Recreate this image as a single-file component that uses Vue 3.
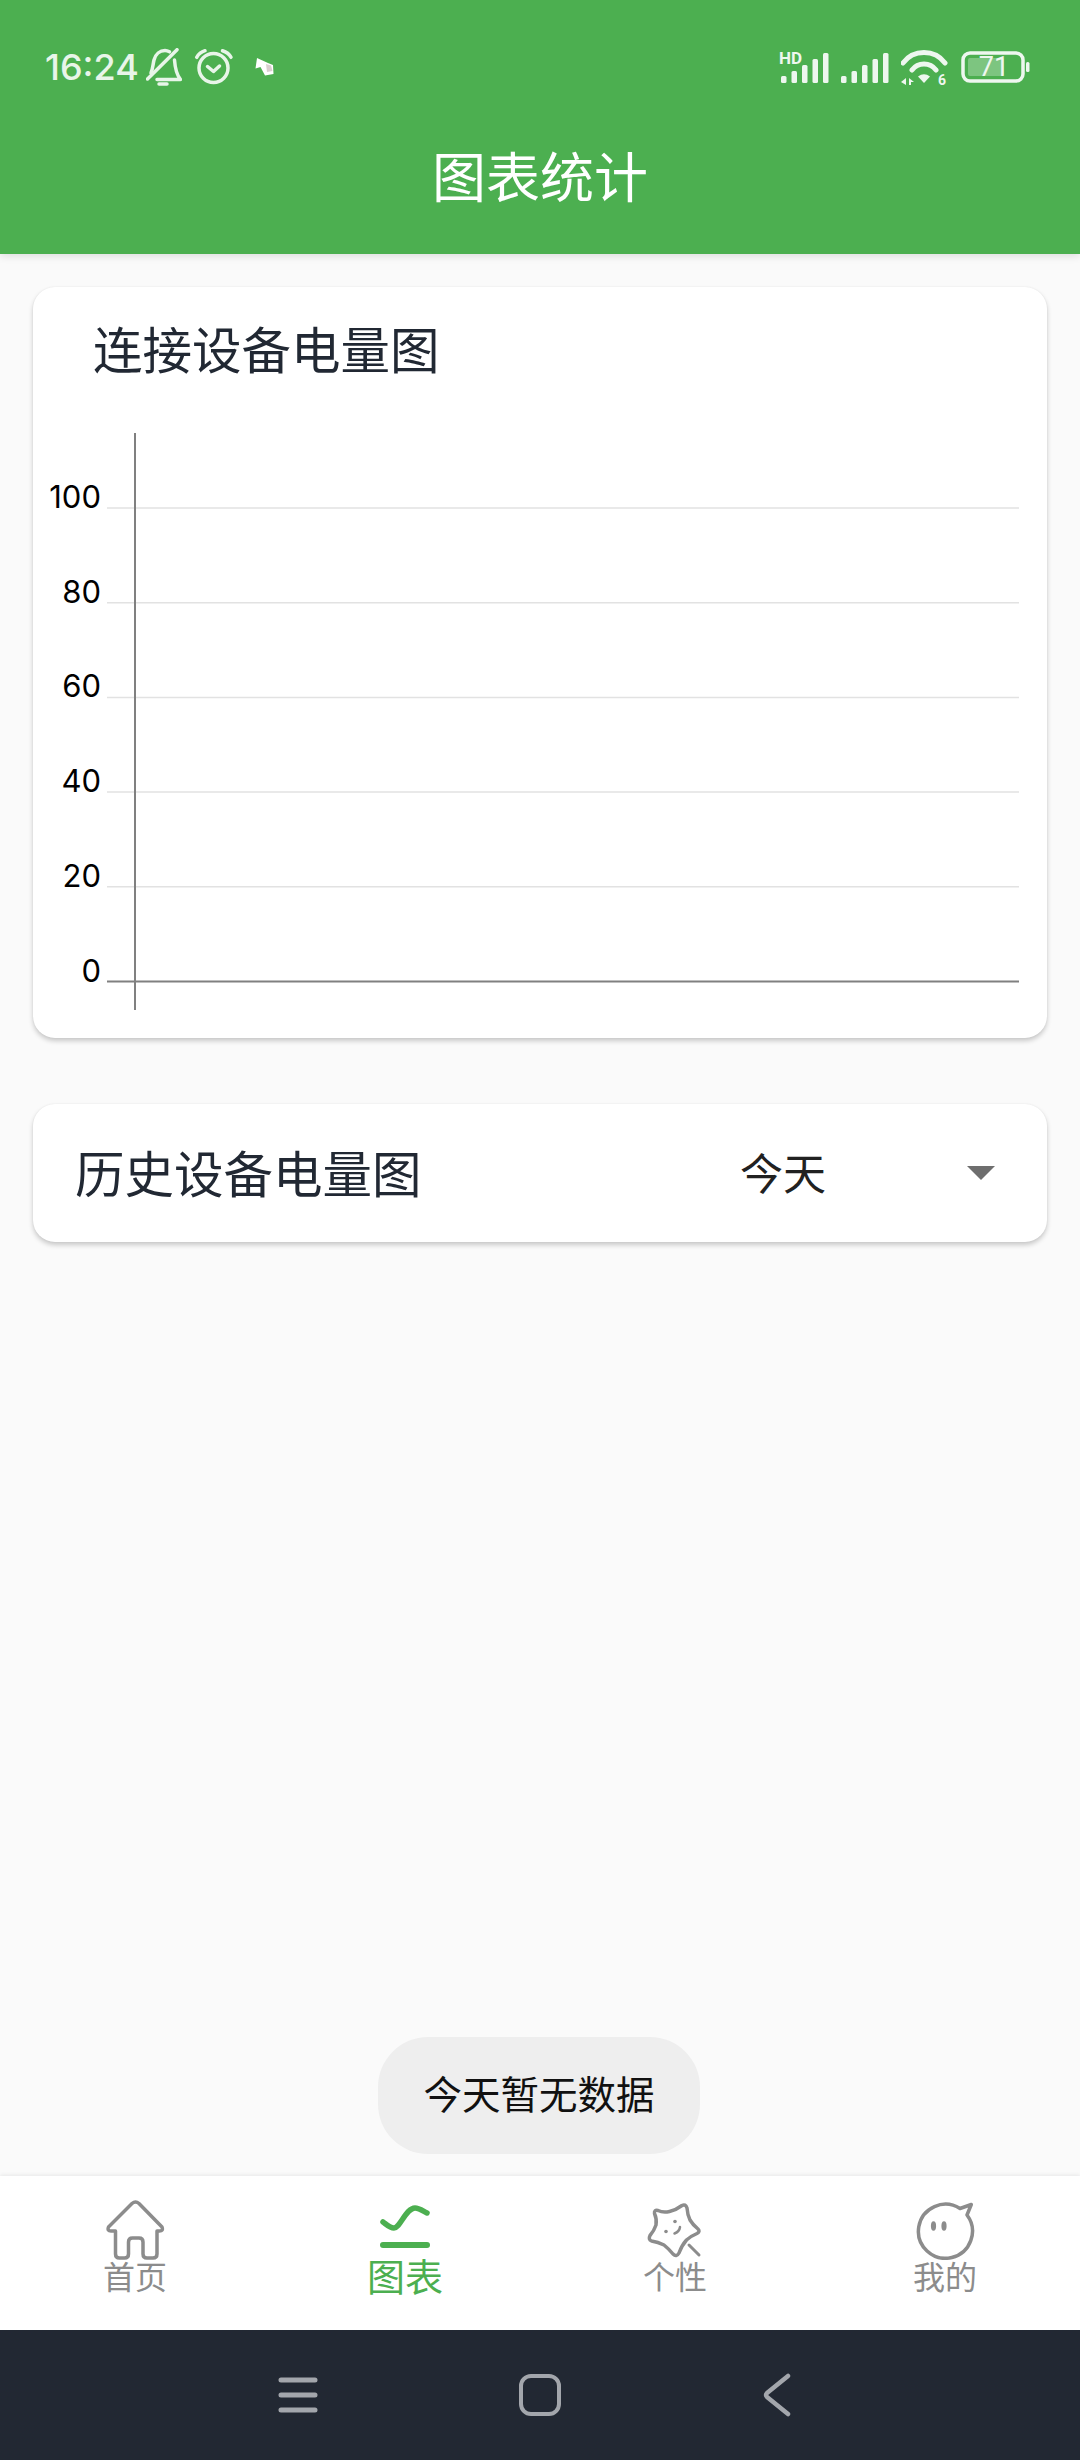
<script setup>
// y axis labels, top to bottom (value 100 sits at y 75 inside the chart svg)
const ticks = [100, 80, 60, 40, 20, 0].map((value, i) => ({
  value,
  y: 75 + i * 94.7,
}));

const tabs = [
  { key: 'home', label: '首页' },
  { key: 'chart', label: '图表', active: true },
  { key: 'style', label: '个性' },
  { key: 'mine', label: '我的' },
];

const signalBars = [
  { x: 0, h: 7 },
  { x: 10.5, h: 12 },
  { x: 21, h: 18 },
  { x: 31.5, h: 24 },
  { x: 42, h: 30 },
];
</script>

<template>
  <div class="screen">
    <header class="app-header">
      <div class="status-bar">
        <div class="status-left">
          <span class="status-time">16:24</span>
          <svg class="bell" width="36" height="38" viewBox="0 0 36 38" fill="none" stroke="#e8f5e9" stroke-width="3.5" stroke-linecap="round" stroke-linejoin="round">
            <path d="M5 25 C7 20 7 16 8 12 C9.5 6 14 2.5 19 2.5 C21 2.5 22 3 23.5 3.8" />
            <path d="M28.5 12 C29 19 30 26 34.5 31.5 H11" />
            <path d="M1.5 31 L31 1.7" />
            <path d="M13 36 H21" />
          </svg>
          <svg class="alarm" width="40" height="38" viewBox="0 0 40 38" fill="none" stroke="#e8f5e9" stroke-width="3.5" stroke-linecap="round" stroke-linejoin="round">
            <circle cx="19.5" cy="20" r="14.5" />
            <path d="M2.7 9.3 Q5.5 4.5 11 2.7" />
            <path d="M28.5 2.7 Q34.5 4.5 37 9.3" />
            <path d="M13.5 18.5 L19.5 23.5 L25.5 18" />
          </svg>
          <svg class="cursor" width="20" height="20" viewBox="0 0 20 20">
            <path d="M2 1 L13 6 L18 8 L18.5 17 L10 18.5 L5.5 10 L0.5 11.5 Z" fill="#fff" />
            <path d="M11 7 L16 8.5 L17.5 14 L12 15 Z" fill="#d9cfcf" />
          </svg>
        </div>
        <div class="status-right">
          <svg width="50" height="36" viewBox="0 0 50 36" fill="#eef7ef">
            <text class="hd-text" x="0" y="15">HD</text>
            <rect v-for="b in signalBars" :key="b.x" :x="b.x + 2" :y="34 - b.h" width="5.5" :height="b.h" rx="1.5" />
          </svg>
          <svg width="48" height="36" viewBox="0 0 48 36" fill="#eef7ef">
            <rect v-for="b in signalBars" :key="b.x" :x="b.x" :y="34 - b.h" width="5.5" :height="b.h" rx="1.5" />
          </svg>
          <svg class="wifi" width="48" height="40" viewBox="0 0 48 40" fill="none">
            <path d="M2 14 A26.4 26.4 0 0 1 44 14" stroke="#eef7ef" stroke-width="5" stroke-linecap="round" />
            <path d="M11 21 A15 15 0 0 1 35 21" stroke="#eef7ef" stroke-width="5" stroke-linecap="round" />
            <path d="M17 27.5 Q23 23 29 27.5 L23 34 Z" fill="#eef7ef" />
            <path d="M5 29 V36 L0 33 Z M8 29 L13 33 H10 V36 H8 Z" fill="#eef7ef" />
            <text class="wifi-six" x="37" y="36">6</text>
          </svg>
          <svg class="battery" width="69" height="32" viewBox="0 0 69 32" fill="none">
            <rect x="2" y="2" width="60" height="28" rx="7" stroke="#eef7ef" stroke-width="3.5" />
            <rect x="7" y="7" width="36" height="18" rx="2" fill="#fff" fill-opacity="0.28" />
            <rect x="65" y="11" width="3.5" height="10" rx="1.5" fill="#eef7ef" />
            <text class="battery-text" x="33" y="25" text-anchor="middle">71</text>
          </svg>
        </div>
      </div>
      <h1 class="app-title">图表统计</h1>
    </header>

    <main class="content">
      <section class="card chart-card">
        <h2 class="chart-title">连接设备电量图</h2>
        <svg class="chart" width="1014" height="577" viewBox="0 0 1014 577">
          <g v-for="t in ticks" :key="t.value">
            <line
              x1="74"
              :y1="t.y"
              x2="986"
              :y2="t.y"
              :stroke="t.value === 0 ? '#808080' : '#e2e2e2'"
              :stroke-width="t.value === 0 ? 2 : 1.5"
            />
            <text class="tick-label" x="68" :y="t.y" text-anchor="end">{{ t.value }}</text>
          </g>
          <line x1="102" y1="0" x2="102" y2="577" stroke="#808080" stroke-width="2" />
        </svg>
      </section>

      <section class="card history-card">
        <h2 class="history-title">历史设备电量图</h2>
        <div class="range-select">
          <span class="range-value">今天</span>
          <i class="caret"></i>
        </div>
      </section>
    </main>

    <div class="toast">今天暂无数据</div>

    <nav class="tab-bar">
      <div
        v-for="tab in tabs"
        :key="tab.key"
        class="tab"
        :class="{ 'tab--active': tab.active }"
      >
        <svg v-if="tab.key === 'home'" width="60" height="60" viewBox="0 0 60 60" fill="none" stroke="#8c8c8c" stroke-width="3.5" stroke-linejoin="round">
          <path d="M10.5 31 H6 Q2 31 3.5 27 L27 3.5 Q30.5 0.5 34 3.5 L57 27 Q58.5 31 54.5 31 H52 V54 Q52 58 48 58 H42 Q38 58 38 54 V42 Q38 38 34 38 H27.5 Q23.5 38 23.5 42 V54 Q23.5 58 19.5 58 H14.5 Q10.5 58 10.5 54 Z" />
        </svg>
        <svg v-else-if="tab.key === 'chart'" width="60" height="60" viewBox="0 0 60 60" fill="none" stroke="#4caf50" stroke-width="5.5" stroke-linecap="round" stroke-linejoin="round">
          <path d="M8 22 C12 25 15 28 19 28 C25 28 31 8 40 8 C44 8 48 11 52 13" />
          <path d="M8 45 H52" stroke-width="6" />
        </svg>
        <svg v-else-if="tab.key === 'style'" width="60" height="60" viewBox="0 0 60 60" fill="none" stroke="#8c8c8c" stroke-width="3.5" stroke-linecap="round" stroke-linejoin="round">
          <path d="M13 10.5 Q18 13 24.5 11.5 Q31 10 37 5.5 Q40.5 3.5 42 8 Q42.5 15 45 20 Q48 25 53 29 Q55.5 31.5 52 33.5 Q46 36 41.5 40 Q37 45 34 53 Q31.5 57.5 28 54 Q24 49 19 45 Q13 42 6.5 41 Q3 39.5 5 35.5 Q9 31 11 25 Q12 19 9.5 13.5 Q9 9.5 13 10.5 Z" />
          <path d="M44 45 L54 55" stroke-width="3" />
          <circle cx="21" cy="31.5" r="1.8" fill="#8c8c8c" stroke="none" />
          <circle cx="30" cy="21.5" r="1.8" fill="#8c8c8c" stroke="none" />
          <path d="M29.5 33.5 Q34.5 31.5 35 27" stroke-width="2.5" />
        </svg>
        <svg v-else width="60" height="60" viewBox="1.5 0 60 60" fill="none" stroke="#8c8c8c" stroke-width="3.5" stroke-linejoin="round">
          <path d="M46.5 8.5 L57.8 4.5 L53.5 15 A27 27 0 1 1 46.5 8.5 Z" />
          <ellipse cx="20" cy="26" rx="2.6" ry="4.8" fill="#8c8c8c" stroke="none" />
          <ellipse cx="30.5" cy="26" rx="2.6" ry="4.8" fill="#8c8c8c" stroke="none" />
        </svg>
        <span class="tab-label">{{ tab.label }}</span>
      </div>
    </nav>

    <div class="system-nav">
      <svg width="40" height="40" viewBox="0 0 40 40" stroke="#a3a6ac" stroke-width="5" stroke-linecap="round">
        <path d="M3 5 H37 M3 20 H37 M3 35 H37" />
      </svg>
      <svg width="44" height="44" viewBox="0 0 44 44" fill="none" stroke="#a3a6ac" stroke-width="4">
        <rect x="3" y="3" width="38" height="38" rx="10" />
      </svg>
      <svg width="30" height="44" viewBox="0 0 30 44" fill="none" stroke="#a3a6ac" stroke-width="4.5" stroke-linecap="round" stroke-linejoin="round">
        <path d="M26 3 L5 20 Q3 22 5 24 L26 41" />
      </svg>
    </div>
  </div>
</template>

<style>
html,
body {
  margin: 0;
  background: #fafafa;
}
</style>

<style scoped>
.screen {
  position: relative;
  display: flex;
  flex-direction: column;
  width: 1080px;
  height: 2460px;
  overflow: hidden;
  background: #fafafa;
  font-family: Roboto, "Noto Sans CJK SC", sans-serif;
}

/* Barre verte */
.app-header {
  flex: none;
  height: 254px;
  box-sizing: border-box;
  padding-top: 44px;
  background: #4caf50;
  box-shadow: 0 2px 8px rgba(0, 0, 0, 0.12);
  z-index: 1;
}

.status-bar {
  display: flex;
  align-items: center;
  justify-content: space-between;
  height: 46px;
  padding: 0 50px 0 45px;
}

.status-left,
.status-right {
  display: flex;
  align-items: center;
}

.status-right svg {
  margin-left: 12px;
}

.status-time {
  font-family: Inter, "Noto Sans CJK SC", sans-serif;
  font-size: 36px;
  font-weight: 500;
  color: #e8f5e9;
  margin-right: 7px;
}

.alarm {
  margin-left: 12px;
}

.cursor {
  margin-left: 21px;
}

.hd-text {
  font-size: 17px;
  font-weight: 700;
}

.wifi {
  margin-bottom: -4px;
}

.wifi-six {
  font-size: 14px;
  font-weight: 700;
  fill: #eef7ef;
}

.battery-text {
  font-size: 27px;
  fill: #eef7ef;
}

.app-title {
  margin: 0;
  margin-top: 55px;
  font-size: 54px;
  font-weight: 400;
  line-height: 70px;
  text-align: center;
  color: #fff;
}

/* Contenu */
.content {
  flex: 1;
  display: flex;
  flex-direction: column;
  gap: 66px;
  padding: 33px 33px 0;
}

.card {
  background: #fff;
  border-radius: 22px;
  box-shadow: 0 3px 5px rgba(0, 0, 0, 0.2), 0 0 2px rgba(0, 0, 0, 0.06);
}

.chart-card {
  height: 751px;
}

.chart-title,
.history-title {
  margin: 0;
  font-size: 49.5px;
  font-weight: 400;
  line-height: 70px;
  color: #212833;
}

.chart-title {
  padding: 30px 0 46px 60px;
}

.chart {
  display: block;
}

.tick-label {
  font-family: Inter, sans-serif;
  font-size: 31px;
  fill: #000;
}

.history-card {
  display: flex;
  align-items: center;
  justify-content: space-between;
  height: 138px;
  padding: 0 52px 0 42px;
}

.history-title {
  padding-top: 5px;
}

.range-select {
  display: flex;
  align-items: center;
  justify-content: space-between;
  width: 255px;
  font-size: 43px;
  color: #212121;
}

.range-value {
  margin-top: -4px;
}

.caret {
  width: 0;
  height: 0;
  border-left: 14px solid transparent;
  border-right: 14px solid transparent;
  border-top: 14px solid #6e6e6e;
}

.toast {
  position: absolute;
  left: 378px;
  top: 2037px;
  width: 322px;
  height: 117px;
  border-radius: 50px;
  background: #eeeeee;
  font-size: 38.5px;
  line-height: 117px;
  text-align: center;
  color: #111;
}

/* Onglets */
.tab-bar {
  flex: none;
  display: grid;
  grid-template-columns: repeat(4, 1fr);
  height: 154px;
  background: #fff;
  box-shadow: 0 -1px 4px rgba(0, 0, 0, 0.08);
}

.tab {
  display: flex;
  flex-direction: column;
  align-items: center;
  padding-top: 24px;
  color: #8c8c8c;
}

.tab--active {
  color: #4caf50;
}

.tab-label {
  font-size: 32px;
  line-height: 36px;
}

.tab--active .tab-label {
  font-size: 38px;
}

/* Barre systeme */
.system-nav {
  flex: none;
  display: flex;
  align-items: center;
  justify-content: center;
  gap: 200px;
  height: 130px;
  padding-right: 10px;
  background: #222833;
}
</style>
